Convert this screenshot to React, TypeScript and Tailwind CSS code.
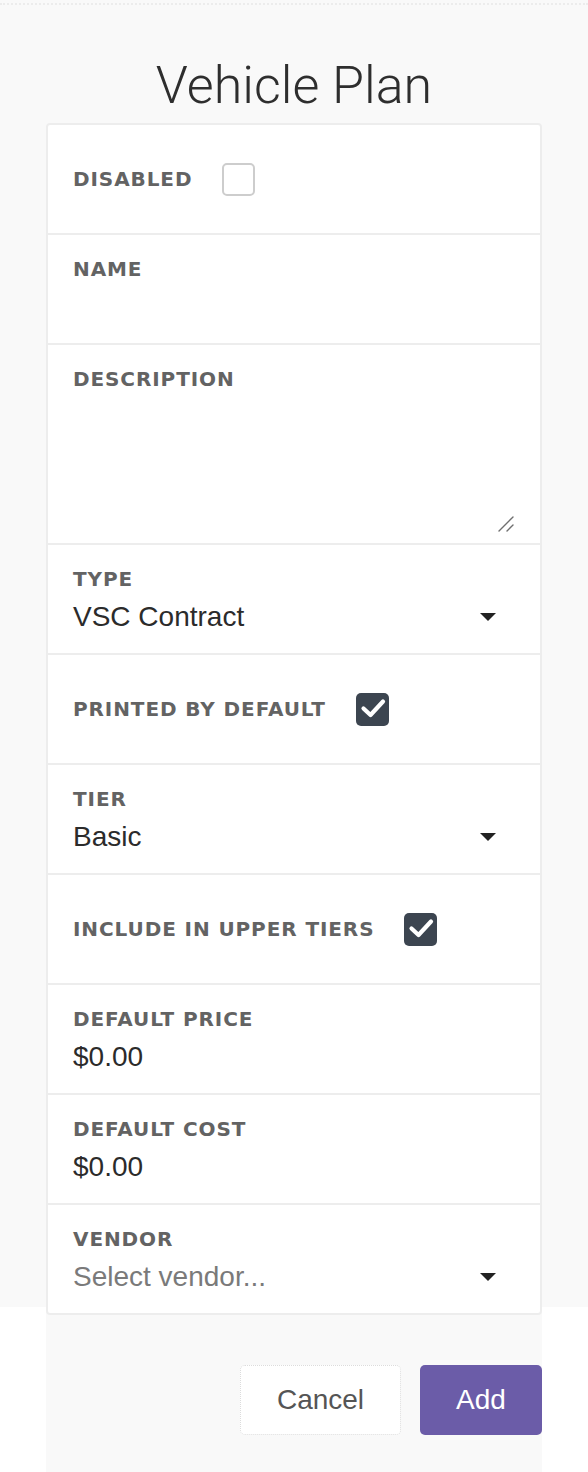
import React from 'react';

const labelCls =
  "font-['DejaVu_Sans',sans-serif] font-bold text-[20px] leading-[24px] tracking-[0.9px] text-[#636363] uppercase";
const valueCls = "font-['Liberation_Sans',Arial,sans-serif] text-[28px] leading-[32px] text-[#2b2b2b]";

function Caret() {
  return (
    <svg width="16" height="8" viewBox="0 0 16 8" className="shrink-0">
      <path d="M0 0 L16 0 L8 8 Z" fill="#222" />
    </svg>
  );
}

function CheckBox({ checked }: { checked: boolean }) {
  if (!checked) {
    return <span className="block w-[33px] h-[33px] rounded-[5px] border-2 border-[#cdcdcd] bg-white" />;
  }
  return (
    <span className="flex w-[33px] h-[33px] rounded-[5px] bg-[#3c4550]">
      <svg width="33" height="33" viewBox="0 0 33 33">
        <path d="M7.5 15.5 L14.5 22 L27 8.5" fill="none" stroke="#fff" strokeWidth="4.2" strokeLinecap="round" strokeLinejoin="round" />
      </svg>
    </span>
  );
}

function CheckRow({ label, checked, first }: { label: string; checked: boolean; first?: boolean }) {
  return (
    <div className={`flex items-center gap-[30px] px-[25px] ${first ? 'h-[108px]' : 'h-[110px] border-t-2 border-[#ededed]'}`}>
      <span className={labelCls}>{label}</span>
      <CheckBox checked={checked} />
    </div>
  );
}

function InputRow({ label, value, placeholder, select }: { label: string; value?: string; placeholder?: string; select?: boolean }) {
  return (
    <div className="h-[110px] border-t-2 border-[#ededed] px-[25px] pt-[22px]">
      <div className={labelCls}>{label}</div>
      <div className="flex items-center justify-between pr-[19px] mt-[10px] h-[32px]">
        {value ? (
          <span className={valueCls}>{value}</span>
        ) : (
          <span className={`${valueCls} !text-[#7a7a7a]`}>{placeholder}</span>
        )}
        {select && <Caret />}
      </div>
    </div>
  );
}

export default function App() {
  return (
    <div className="min-h-[1472px] bg-white">
      <div className="h-[1307px] bg-[#f9f9f9]">
        <div className="h-[3px]" />
        <div className="border-t-2 border-dotted border-[#ececec]" />
        <div className="w-[496px] mx-auto bg-[#f9f9f9] pb-[38px]">
          <h1 className="pt-[49px] h-[118px] text-center font-['Roboto',sans-serif] font-light text-[52px] leading-[64px] text-[#2e2e2e]">
            Vehicle Plan
          </h1>
          <div className="bg-white border-2 border-[#ededed] rounded-[4px]">
            <CheckRow label="Disabled" checked={false} first />
            <div className="h-[110px] border-t-2 border-[#ededed] px-[25px] pt-[22px]">
              <div className={labelCls}>Name</div>
            </div>
            <div className="relative h-[200px] border-t-2 border-[#ededed] px-[25px] pt-[22px]">
              <div className={labelCls}>Description</div>
              <svg width="16" height="16" viewBox="0 0 16 16" className="absolute right-[26px] bottom-[11px]">
                <path d="M1 15 L15 1 M9 15 L15 9" stroke="#6f6f6f" strokeWidth="1.4" strokeLinecap="round" />
              </svg>
            </div>
            <InputRow label="Type" value="VSC Contract" select />
            <CheckRow label="Printed by default" checked />
            <InputRow label="Tier" value="Basic" select />
            <CheckRow label="Include in upper tiers" checked />
            <InputRow label="Default price" value="$0.00" />
            <InputRow label="Default cost" value="$0.00" />
            <InputRow label="Vendor" placeholder="Select vendor..." select />
          </div>
          <div className="flex justify-end gap-[19px] mt-[50px]">
            <button className="w-[161px] h-[70px] rounded-[5px] bg-white border border-dotted border-[#dcdcdc] font-['Liberation_Sans',Arial,sans-serif] text-[28px] text-[#555]">
              Cancel
            </button>
            <button className="w-[122px] h-[70px] rounded-[5px] bg-[#6b5ca8] font-['Liberation_Sans',Arial,sans-serif] text-[28px] text-white">
              Add
            </button>
          </div>
        </div>
      </div>
    </div>
  );
}
